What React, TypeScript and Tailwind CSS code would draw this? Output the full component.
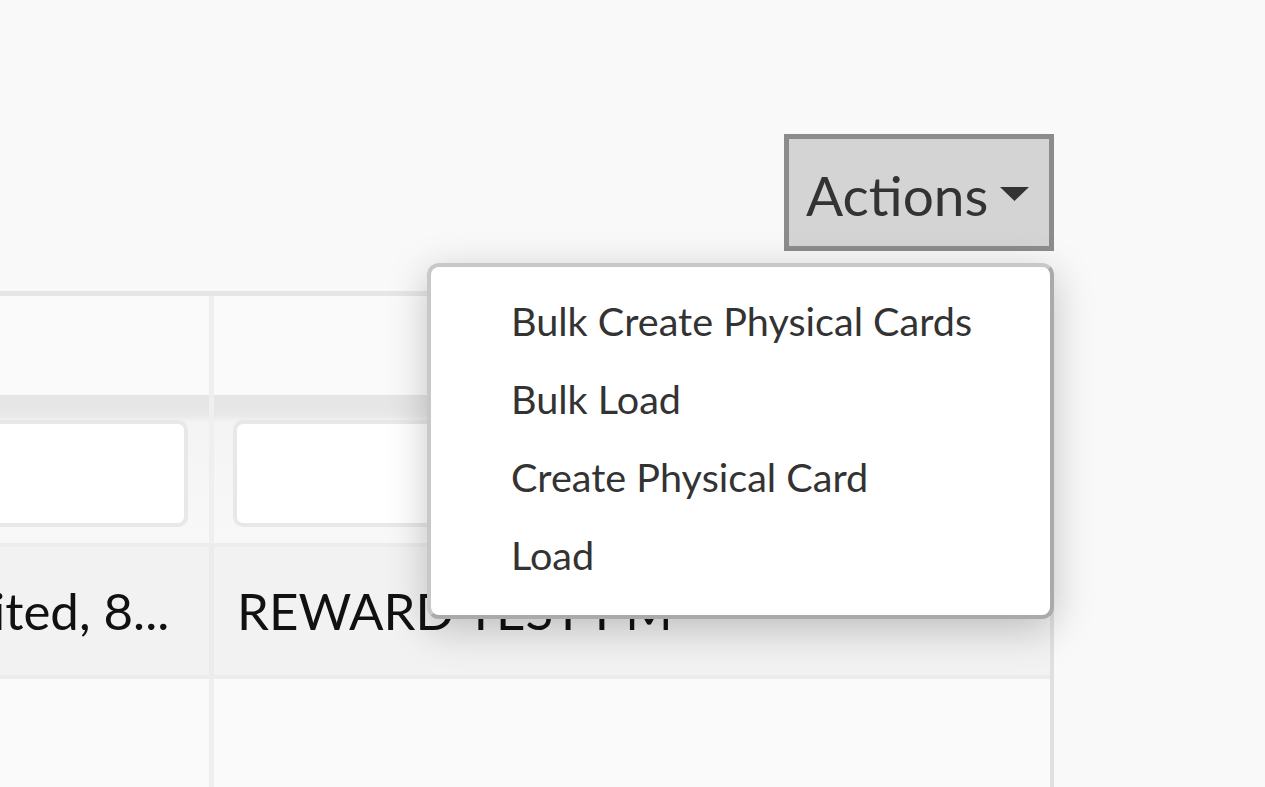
import React from "react";

const menuItems = ["Bulk Create Physical Cards", "Bulk Load", "Create Physical Card", "Load"];

function ActionsMenu() {
  return (
    <div className="relative">
      <button className="flex h-[117px] w-[270px] items-center border-[5px] border-[#8c8c8c] bg-[#d4d4d4] pl-[17px] pt-[6px] text-[55px] leading-none text-[#333]">
        <span>Actions</span>
        <svg className="ml-[12px] mt-[-4px]" width="29" height="14" viewBox="0 0 29 14">
          <path d="M0 0 L29 0 L14.5 14 Z" fill="#333" />
        </svg>
      </button>

      {/* open dropdown */}
      <div className="absolute right-0 top-[129px] z-10 w-[627px] rounded-[12px] border-[4px] border-[#c8c8c8] border-r-[#aaaaaa] border-b-[#aaaaaa] bg-white pt-[15px] pb-[21px] pl-[80px] shadow-[0_10px_40px_rgba(0,0,0,0.22)]">
        {menuItems.map((item) => (
          <div key={item} className="h-[78px] text-[39.6px] leading-[78px] text-[#333] whitespace-nowrap">
            {item}
          </div>
        ))}
      </div>
    </div>
  );
}

export default function App() {
  return (
    <div className="relative h-[787px] w-[1265px] overflow-hidden bg-[#f9f9f9] font-['Lato',sans-serif]">
      <div className="flex justify-end pr-[211px] pt-[134px]">
        <ActionsMenu />
      </div>

      {/* table */}
      <div className="mt-[40px] w-[1054px] border-t-[5px] border-r-[4px] border-t-[#e6e6e6] border-r-[#e0e0e0]">
        {/* header row */}
        <div className="grid h-[99px] grid-cols-[214px_1fr] bg-[#fafafa]">
          <div className="border-r-[5px] border-[#efefef]" />
          <div />
        </div>

        {/* filter row */}
        <div className="grid h-[148px] grid-cols-[214px_1fr] bg-[linear-gradient(to_bottom,#e5e5e5,#e8e8e8_20px,#f4f4f4_28px,#f8f8f8)]">
          <div className="flex items-center border-r-[5px] border-[#efefef] pr-[21px] pt-[8px]">
            <div className="ml-[-20px] h-[107px] flex-1 rounded-[10px] border-[4px] border-[#e8e8e8] bg-white" />
          </div>
          <div className="flex items-center pl-[19px] pr-[21px] pt-[8px]">
            <div className="h-[107px] flex-1 rounded-[10px] border-[4px] border-[#e8e8e8] bg-white" />
          </div>
        </div>

        {/* data row */}
        <div className="grid h-[136px] grid-cols-[214px_1fr] border-y-[4px] border-[#ececec] bg-[#f2f2f2] text-[51px] text-[#111]">
          <div className="flex items-center overflow-hidden border-r-[5px] border-[#ebebeb] whitespace-nowrap">
            <span className="ml-[-7px]">ited, 8...</span>
          </div>
          <div className="flex items-center pl-[23px] whitespace-nowrap">REWARD TEST PM</div>
        </div>

        {/* empty row */}
        <div className="grid h-[120px] grid-cols-[214px_1fr] bg-[#fafafa]">
          <div className="border-r-[5px] border-[#efefef]" />
          <div />
        </div>
      </div>
    </div>
  );
}
